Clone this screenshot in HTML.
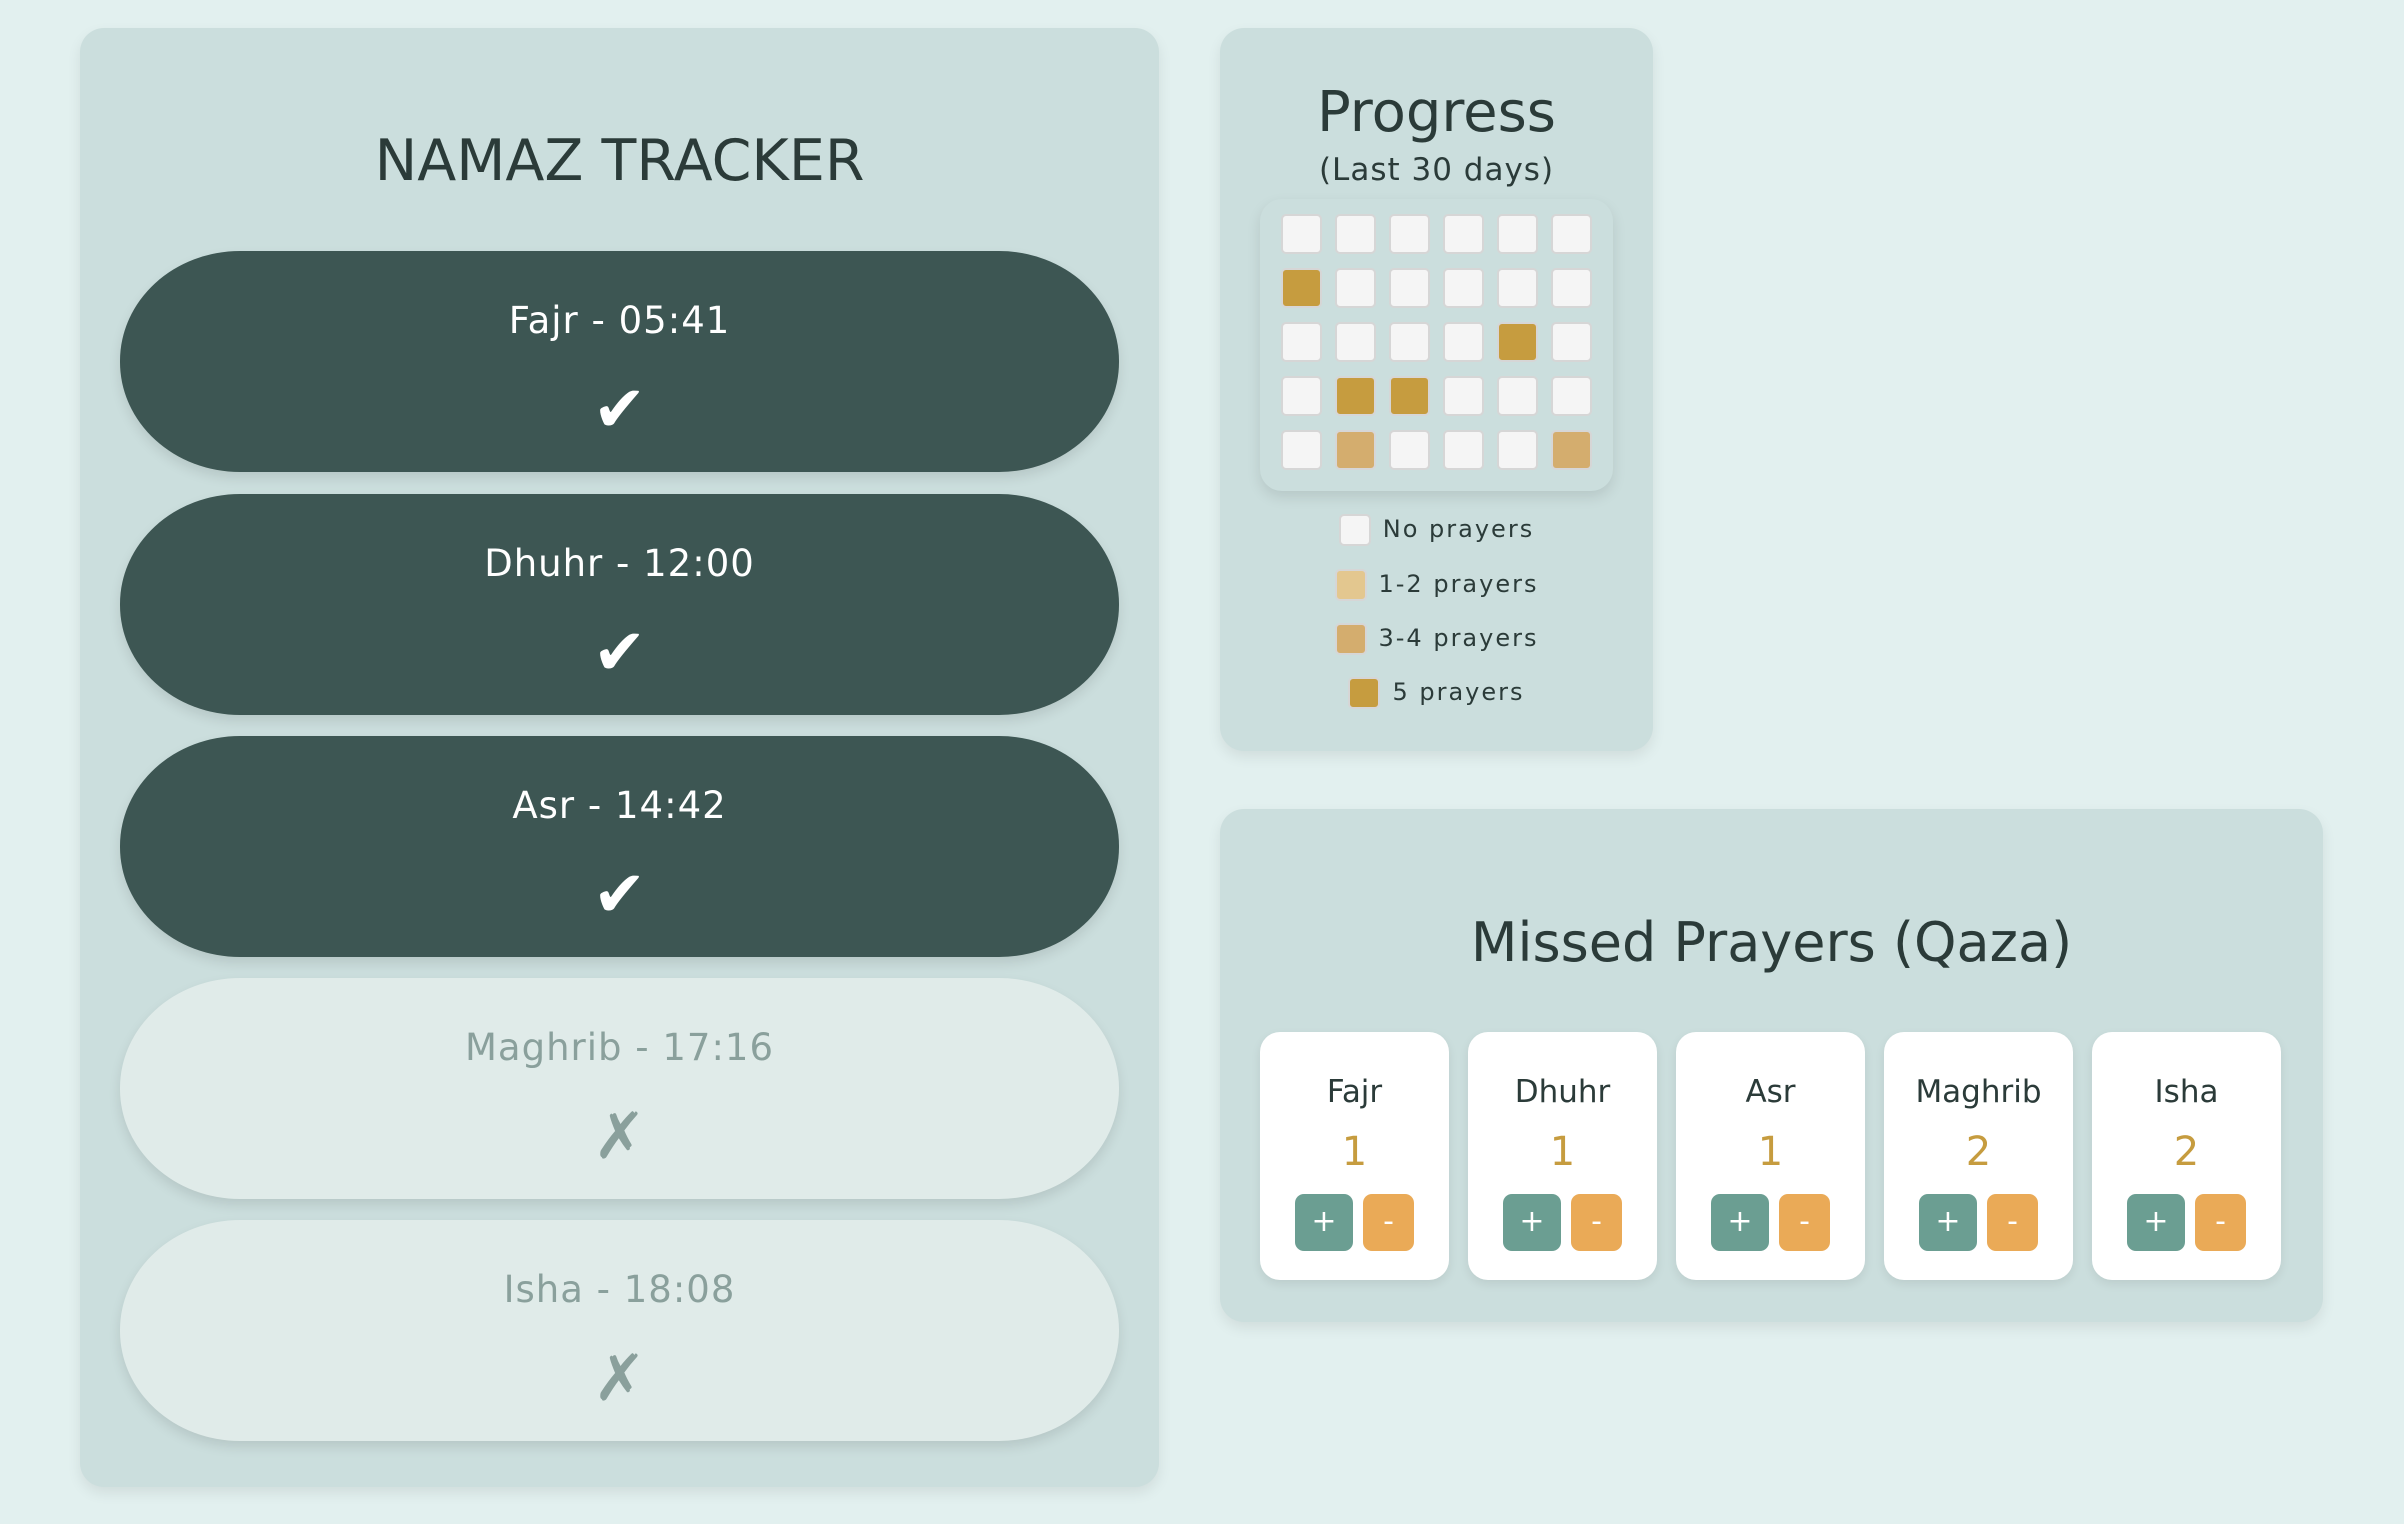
<!DOCTYPE html>
<html><head><meta charset="utf-8"><style>
*{margin:0;padding:0;box-sizing:border-box}
body{width:2404px;height:1524px;background:#e2f0ef;font-family:"DejaVu Sans","Liberation Sans",sans-serif;position:relative;overflow:hidden;color:#2b3b39}
.panel{position:absolute;background:#cbdedd;border-radius:24px;box-shadow:0 6px 14px rgba(0,0,0,0.08)}
.c{position:absolute;left:0;right:0;text-align:center}
.pill{position:absolute;left:120px;width:999px;height:221px;border-radius:120px/110px;box-shadow:0 6px 12px rgba(0,0,0,0.1)}
.pill .t{position:absolute;left:0;right:0;top:48px;text-align:center;font-size:37px;letter-spacing:1px}
.pill .m{position:absolute;left:0;right:0;top:122px;text-align:center;font-size:64px;font-weight:bold}
.dark{background:#3d5653;color:#fff}
.light{background:#e0ebe9;color:#8aa09c}
.cell{position:absolute;width:41px;height:40px;border:2px solid #d6d6d6;border-radius:5px;background:#f5f5f5}
.leg{position:absolute;left:1220px;width:433px;text-align:center;font-size:24px;letter-spacing:2px;color:#2b3b39;height:32px;line-height:32px}
.leg span.s{display:inline-block;width:32px;height:32px;border:2px solid #d6d6d6;border-radius:5px;vertical-align:middle;margin-right:12px;background:#f5f5f5}
.cell.g5,.leg span.s.g5{background:#c69c3f}
.cell.g3,.leg span.s.g3{background:#d4ad6e}
.leg span.s.g1{background:#e3c78f}
.q{position:absolute;top:1032px;width:189px;height:248px;background:#fff;border-radius:20px;box-shadow:0 4px 10px rgba(0,0,0,0.08)}
.q .n{position:absolute;left:0;right:0;top:42px;text-align:center;font-size:31px;color:#2b3b39}
.q .v{position:absolute;left:0;right:0;top:97px;text-align:center;font-size:40px;color:#c69c3f}
.q .p,.q .mi{position:absolute;top:162px;height:57px;border-radius:9px;color:#fff;text-align:center;line-height:55px;font-size:30px}
.q .p{left:35px;width:58px;background:#6b9e92}
.q .mi{left:103px;width:51px;background:#eaaa57}
</style></head><body>
<div class="panel" style="left:80px;top:28px;width:1079px;height:1459px">
<div class="c" style="top:100px;font-size:57px">NAMAZ TRACKER</div>
</div>
<div class="pill dark" style="top:251px"><div class="t">Fajr - 05:41</div><div class="m">✔</div></div>
<div class="pill dark" style="top:494px"><div class="t">Dhuhr - 12:00</div><div class="m">✔</div></div>
<div class="pill dark" style="top:736px"><div class="t">Asr - 14:42</div><div class="m">✔</div></div>
<div class="pill light" style="top:978px"><div class="t">Maghrib - 17:16</div><div class="m">✗</div></div>
<div class="pill light" style="top:1220px"><div class="t">Isha - 18:08</div><div class="m">✗</div></div>

<div class="panel" style="left:1220px;top:28px;width:433px;height:723px">
<div class="c" style="top:52px;font-size:56px">Progress</div>
<div class="c" style="top:124px;font-size:31px;letter-spacing:1px">(Last 30 days)</div>
<div style="position:absolute;left:40px;top:171px;width:353px;height:292px;border-radius:22px;background:#cbdedd;box-shadow:0 6px 14px rgba(0,0,0,0.1)"></div>
</div>
<div class="leg" style="top:513px"><span class="s"></span>No prayers</div>
<div class="leg" style="top:568px"><span class="s g1"></span>1-2 prayers</div>
<div class="leg" style="top:622px"><span class="s g3"></span>3-4 prayers</div>
<div class="leg" style="top:676px"><span class="s g5"></span>5 prayers</div>

<div class="panel" style="left:1220px;top:809px;width:1103px;height:513px">
<div class="c" style="top:102px;font-size:54px">Missed Prayers (Qaza)</div>
</div>
<div class="q" style="left:1260px"><div class="n">Fajr</div><div class="v">1</div><div class="p">+</div><div class="mi">-</div></div>
<div class="q" style="left:1468px"><div class="n">Dhuhr</div><div class="v">1</div><div class="p">+</div><div class="mi">-</div></div>
<div class="q" style="left:1676px"><div class="n">Asr</div><div class="v">1</div><div class="p">+</div><div class="mi">-</div></div>
<div class="q" style="left:1884px"><div class="n">Maghrib</div><div class="v">2</div><div class="p">+</div><div class="mi">-</div></div>
<div class="q" style="left:2092px"><div class="n">Isha</div><div class="v">2</div><div class="p">+</div><div class="mi">-</div></div>

<div style="position:absolute;left:0;top:0">
<div class="cell" style="left:1281px;top:214px"></div><div class="cell" style="left:1335px;top:214px"></div><div class="cell" style="left:1389px;top:214px"></div><div class="cell" style="left:1443px;top:214px"></div><div class="cell" style="left:1497px;top:214px"></div><div class="cell" style="left:1551px;top:214px"></div>
<div class="cell g5" style="left:1281px;top:268px"></div><div class="cell" style="left:1335px;top:268px"></div><div class="cell" style="left:1389px;top:268px"></div><div class="cell" style="left:1443px;top:268px"></div><div class="cell" style="left:1497px;top:268px"></div><div class="cell" style="left:1551px;top:268px"></div>
<div class="cell" style="left:1281px;top:322px"></div><div class="cell" style="left:1335px;top:322px"></div><div class="cell" style="left:1389px;top:322px"></div><div class="cell" style="left:1443px;top:322px"></div><div class="cell g5" style="left:1497px;top:322px"></div><div class="cell" style="left:1551px;top:322px"></div>
<div class="cell" style="left:1281px;top:376px"></div><div class="cell g5" style="left:1335px;top:376px"></div><div class="cell g5" style="left:1389px;top:376px"></div><div class="cell" style="left:1443px;top:376px"></div><div class="cell" style="left:1497px;top:376px"></div><div class="cell" style="left:1551px;top:376px"></div>
<div class="cell" style="left:1281px;top:430px"></div><div class="cell g3" style="left:1335px;top:430px"></div><div class="cell" style="left:1389px;top:430px"></div><div class="cell" style="left:1443px;top:430px"></div><div class="cell" style="left:1497px;top:430px"></div><div class="cell g3" style="left:1551px;top:430px"></div>
</div>
</body></html>
